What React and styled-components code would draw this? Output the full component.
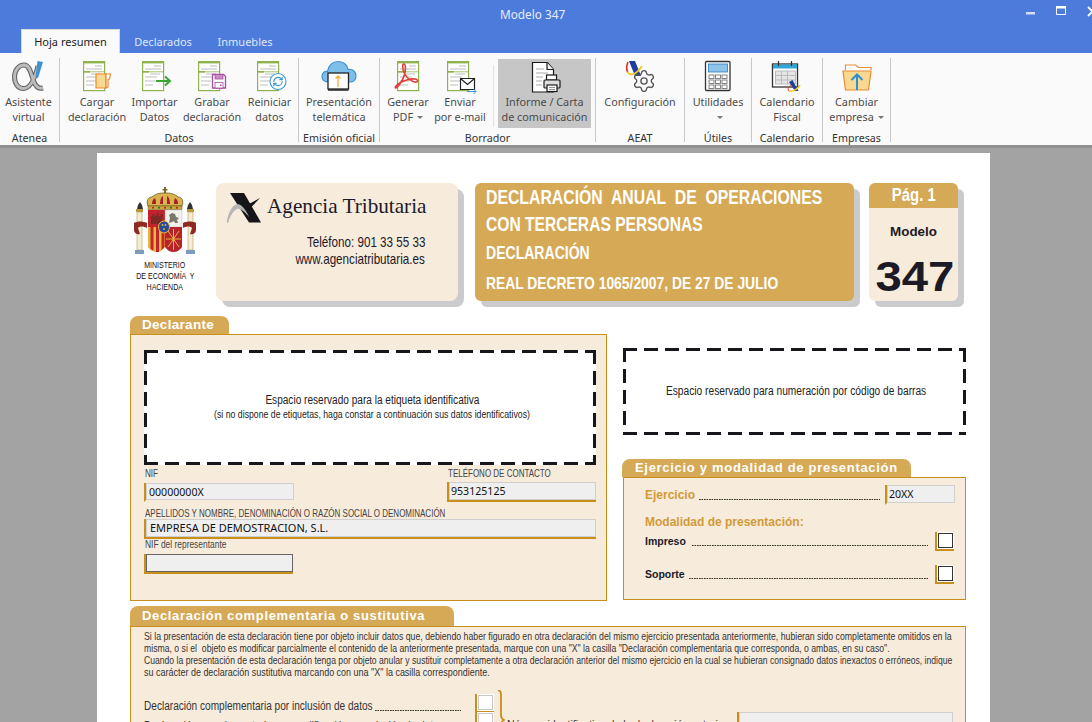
import React from 'react'
import styled, { createGlobalStyle } from 'styled-components'
import { Settings, RefreshCw } from 'lucide-react'

const GOLD = '#c8901a'
const TAN = '#d6a956'
const CREAM = '#f7ebdc'
const SANS = '"Liberation Sans", Arial, sans-serif'
const UI = '"Noto Sans", "Open Sans", sans-serif'

const GlobalStyle = createGlobalStyle`
  html, body { margin: 0; padding: 0; background: #a3a3a3; }
  * { box-sizing: border-box; }
`

const Window = styled.div`
  width: 1092px;
  height: 722px;
  overflow: hidden;
  display: flex;
  flex-direction: column;
  font-family: ${UI};
`

const TitleBar = styled.header`
  height: 53px;
  flex: none;
  background: #4c7bdc;
  color: #fff;
`

const TitleRow = styled.div`
  height: 29px;
  display: grid;
  grid-template-columns: 500px auto 1fr;
  align-items: center;
`

const Title = styled.div`
  font-size: 11.8px;
  color: #e6ecfa;
  grid-column: 2;
  margin-top: -2px;
`

const Controls = styled.div`
  display: flex;
  justify-content: flex-end;
  align-items: flex-start;
  gap: 21px;
  margin-right: -6px;
  margin-top: -6px;
`

const Tabs = styled.nav`
  height: 24px;
  display: flex;
  padding-left: 21px;
  font-size: 11px;
`

const Tab = styled.div`
  height: 24px;
  line-height: 25px;
  text-align: center;
  width: ${p => p.$w}px;
  background: ${p => (p.$active ? '#fafafa' : 'transparent')};
  color: ${p => (p.$active ? '#222' : '#dfe7f8')};
  box-shadow: ${p => (p.$active ? 'inset 1px 1px 0 #d8d8d8, inset -1px 0 0 #d8d8d8' : 'none')};
`

const Ribbon = styled.section`
  height: 95px;
  flex: none;
  padding-top: 5px;
  display: flex;
  align-items: flex-start;
  background: #fafafa;
  border-bottom: 3px solid #909090;
`

const Group = styled.div`
  width: ${p => p.$w}px;
  height: 84px;
  flex: none;
  border-right: 1px solid #c9c9c9;
`

const GroupButtons = styled.div`
  height: 72px;
  display: flex;
  align-items: flex-start;
  padding-left: ${p => p.$pl || 0}px;
`

const GroupLabel = styled.div`
  text-align: center;
  font-size: 10.7px;
  line-height: 16px;
  color: #333;
  white-space: nowrap;
`

const RibbonButton = styled.div`
  width: ${p => p.$w}px;
  height: ${p => (p.$active ? 69 : 72)}px;
  margin-top: ${p => (p.$active ? 1 : 0)}px;
  flex: none;
  display: flex;
  flex-direction: column;
  align-items: center;
  background: ${p => (p.$active ? '#c6c6c6' : 'transparent')};
  color: #4a4a4a;
  font-size: 10.8px;
  line-height: 15px;
  text-align: center;
  white-space: nowrap;
`

const IconSlot = styled.div`
  height: ${p => (p.$active ? 35 : 36)}px;
  flex: none;
  svg { display: block; }
`

const ThinSep = styled.div`
  width: 1px;
  height: 62px;
  margin: 7px 4px 0 6px;
  background: #e0e0e0;
  flex: none;
`

const Caret = styled.span`
  display: inline-block;
  width: 0;
  height: 0;
  margin-left: 4px;
  vertical-align: 2px;
  border-left: 3px solid transparent;
  border-right: 3px solid transparent;
  border-top: 3px solid #777;
`

const Workspace = styled.main`
  flex: 1;
  min-height: 0;
  background: #a3a3a3;
  padding: 5px 0 0 97px;
`

const Page = styled.div`
  width: 893px;
  height: 700px;
  background: #fff;
  padding: 30px 24px 0 33px;
`

// the form uses a condensed face, none is installed so Arial metrics get squeezed
const Squeeze = styled.span`
  display: inline-block;
  width: ${p => (p.$w ? `${p.$w}px` : 'auto')};
  flex: none;
  margin-bottom: ${p => p.$mb || 0}px;
  white-space: pre;
  transform: scaleX(${p => p.$x});
  transform-origin: ${p => p.$origin || 'left'} center;
`

const Header = styled.div`
  display: flex;
  height: 118px;
`

const Ministry = styled.div`
  width: 86px;
  flex: none;
  padding-left: 3px;
  padding-top: 4px;
`

const MinistryName = styled.div`
  width: 64px;
  display: flex;
  flex-direction: column;
  align-items: center;
  font-family: ${SANS};
  font-size: 8.8px;
  line-height: 11px;
  color: #111;
`

const AgencyCard = styled.div`
  width: 242px;
  border-radius: 8px;
  background: ${CREAM};
  box-shadow: 6px 6px 0 #cbcbcd;
  padding: 10px 33px 0 11px;
  display: flex;
  flex-direction: column;
`

const AgencyBrand = styled.div`
  display: flex;
  align-items: flex-start;
  gap: 6px;
  font-family: "Liberation Serif", serif;
  font-size: 21.2px;
  line-height: 27px;
  color: #1a1a2a;
  height: 32px;
  white-space: nowrap;
  svg { flex: none; }
`

const AgencyContact = styled.div`
  margin-top: 9px;
  display: flex;
  flex-direction: column;
  align-items: flex-end;
  font-family: ${SANS};
  font-size: 14.2px;
  line-height: 17px;
  color: #1a1a2a;
`

const TitleCard = styled.div`
  width: 379px;
  margin-left: 17px;
  border-radius: 6px;
  background: ${TAN};
  box-shadow: 6px 6px 0 #cbcbcd;
  padding: 0 11px;
  font-family: ${SANS};
  font-weight: bold;
  color: #fff;
  display: flex;
  flex-direction: column;
`

const TitleLine = styled.div`
  height: ${p => p.$h}px;
  line-height: ${p => p.$h}px;
  font-size: ${p => p.$size}px;
  white-space: nowrap;
`

const PageCard = styled.div`
  width: 89px;
  margin-left: 15px;
  border-radius: 6px;
  background: ${CREAM};
  box-shadow: 6px 6px 0 #cbcbcd;
  text-align: center;
`

const PageNumber = styled.div`
  height: 25px;
  line-height: 25px;
  border-radius: 6px 6px 0 0;
  background: ${TAN};
  color: #fff;
  font-family: ${SANS};
  font-weight: bold;
  font-size: 17.5px;
`

const ModelLabel = styled.div`
  margin-top: 16px;
  font-family: ${SANS};
  font-weight: bold;
  font-size: 13.4px;
  line-height: 16px;
  color: #1c1a24;
`

const ModelNumber = styled.div`
  margin-top: 14px;
  padding-left: 3px;
  font-family: ${SANS};
  font-weight: bold;
  font-size: 43px;
  line-height: 44px;
  color: #1c1a24;
`

const FormGrid = styled.div`
  margin-top: 15px;
  display: grid;
  grid-template-columns: 477px 343px;
  column-gap: 16px;
  align-items: start;
`

const Spacer = styled.div`
  height: ${p => p.$h}px;
`

const SectionTab = styled.div`
  width: ${p => p.$w}px;
  height: ${p => p.$h || 18}px;
  line-height: ${p => p.$h || 18}px;
  margin-left: ${p => p.$ml || 0}px;
  padding-left: ${p => p.$pl}px;
  border-radius: 8px 8px 0 0;
  background: ${TAN};
  color: #fff;
  font-family: ${SANS};
  font-weight: bold;
  font-size: ${p => p.$size || 13}px;
  letter-spacing: ${p => p.$ls || 0}px;
  white-space: nowrap;
`

const Panel = styled.div`
  height: ${p => p.$h}px;
  border: 1px solid ${GOLD};
  background: ${CREAM};
  padding: ${p => p.$pad};
`

const Reserved = styled.div`
  height: ${p => p.$h}px;
  padding: 0 0 2px 4px;
  background-color: #fff;
  background-image:
    linear-gradient(90deg, #16161c 14px, transparent 14px),
    linear-gradient(90deg, #16161c 14px, transparent 14px),
    linear-gradient(#16161c 14px, transparent 14px),
    linear-gradient(#16161c 14px, transparent 14px);
  background-size: 21px 3px, 21px 3px, 3px 21px, 3px 21px;
  background-position: 0 0, 0 100%, 0 0, 100% 0;
  background-repeat: repeat-x, repeat-x, repeat-y, repeat-y;
  display: flex;
  flex-direction: column;
  align-items: center;
  justify-content: center;
  font-family: ${SANS};
  color: #222;
`

const ReservedMain = styled.div`
  font-size: 12px;
  line-height: 16px;
`

const ReservedSub = styled.div`
  font-size: 10.4px;
  line-height: 14px;
`

const FieldRow = styled.div`
  display: flex;
  justify-content: space-between;
  align-items: flex-end;
  margin-top: ${p => p.$mt}px;
`

const Field = styled.div`
  width: ${p => p.$w};
  margin-top: ${p => p.$mt || 0}px;
`

const FieldLabel = styled.div`
  height: 13px;
  line-height: ${p => p.$lh || 13}px;
  margin-bottom: ${p => p.$mb || 0}px;
  padding-left: 1px;
  font-family: ${SANS};
  font-size: 10.4px;
  color: #444;
  white-space: nowrap;
`

const Input = styled.div`
  height: ${p => p.$h || 20}px;
  width: ${p => p.$w || '100%'};
  flex: none;
  border-left: 2px solid ${GOLD};
  border-bottom: 2px solid ${p => (p.$plain ? CREAM : GOLD)};
  background: #efefef;
  box-shadow: inset 0 0 0 1px ${p => (p.$dark ? '#666' : '#cfcfcf')};
  padding-left: ${p => p.$pl || 3}px;
  font-family: ${UI};
  font-weight: normal;
  font-size: ${p => p.$size || 10.6}px;
  line-height: 18px;
  color: #111;
  white-space: nowrap;
`

const LeaderRow = styled.div`
  display: flex;
  align-items: ${p => p.$align || 'center'};
  height: ${p => p.$h}px;
  margin-top: ${p => p.$mt || 0}px;
  padding: 0 ${p => p.$pr || 0}px 0 ${p => p.$pl || 0}px;
  font-family: ${SANS};
  font-weight: ${p => (p.$normal ? 'normal' : 'bold')};
  font-size: ${p => p.$size}px;
  line-height: 13px;
  color: ${p => p.$color || '#1a1a24'};
  white-space: nowrap;
`

const Dots = styled.span`
  flex: 1;
  height: 3px;
  margin: ${p => p.$m};
  align-self: center;
  transform: translateY(${p => p.$dy || 4}px);
  background-image: radial-gradient(circle at 1px 1.5px, #332 0.8px, transparent 1px);
  background-size: 2.5px 3px;
  background-repeat: repeat-x;
`

const ModeTitle = styled.div`
  margin-top: 9px;
  height: 17px;
  line-height: 17px;
  font-family: ${SANS};
  font-weight: bold;
  font-size: 12px;
  color: #d39a38;
`

const Checkbox = styled.span`
  width: 19px;
  height: 19px;
  flex: none;
  border-left: 2px solid ${GOLD};
  border-bottom: 2px solid ${GOLD};
  background: #fff;
  display: flex;
  align-items: center;
  justify-content: center;
  &::after {
    content: '';
    width: 13px;
    height: 13px;
    border: 1px solid ${p => (p.$light ? '#c8c8c8' : '#333')};
  }
`

const Complement = styled.section`
  margin-top: 5px;
`

const Note = styled.div`
  padding: 4px 0 0 13px;
  font-family: ${SANS};
  font-size: 10.5px;
  line-height: 11.6px;
  color: #333;
`

const NoteLine = styled(Squeeze)`
  display: block;
  margin-top: ${p => p.$mt || 0}px;
`

const OptionRows = styled.div`
  margin-top: 16px;
  display: flex;
`

const OptionList = styled.div`
  width: 363px;
  flex: none;
`

const Brace = styled.div`
  width: 10px;
  flex: none;
  margin: -4px 0 0 3px;
  svg { display: block; }
`

const PriorNumber = styled.div`
  flex: 1;
  display: flex;
  font-family: ${SANS};
  font-size: 12px;
  color: #333;
`

const PriorLabel = styled.div`
  width: 230px;
  flex: none;
  padding-top: 24px;
`

const PriorInput = styled.div`
  width: 216px;
  padding-top: 18px;
`

function Doc({ x = 0, y = 3 }) {
  return (
    <g transform={`translate(${x} ${y})`}>
      <rect x=".6" y=".6" width="21" height="29" fill="#fff" stroke="#8fb14e" strokeWidth="1.2" />
      <rect x="0" y="0" width="22" height="2.4" fill="#8fb14e" />
      <rect x="0" y="10" width="7" height="1.6" fill="#8fb14e" />
      <path d="M1 10.8h21" stroke="#8fb14e" strokeWidth=".8" />
      <path d="M12 5h7M3 8h16M8 13h10M3 16h12M3 20h10M3 24h8" stroke="#bdbdbd" strokeWidth="1" />
    </g>
  )
}

const IconBox = ({ w = 36, children }) => (
  <svg width={w} height="36" viewBox={`0 0 ${w} 36`}>{children}</svg>
)

const alphaPath = 'M27 8C24 20 20 30 13 30.500 7 31 3.500 25 3.500 19 3.500 12 8 7 13 7c6 0 7 9 10 17 2 5 5 7 9 6'

const AlphaIcon = () => (
  <IconBox>
    <path d={alphaPath} fill="none" stroke="#666" strokeWidth="5" />
    <path d={alphaPath} fill="none" stroke="#bcbcbc" strokeWidth="2.800" />
    <path d="M26.500 3l5.500 1-5 16-2.500-1z" fill="#3f93d3" />
  </IconBox>
)

const LoadIcon = () => (
  <IconBox>
    <Doc x={4} />
    <path d="M17 16h10v14H17z" fill="#f7d98f" stroke="#ed8a2d" strokeWidth="1.2" />
    <path d="M27 16h4.500l-1 5-1.500 .5V29l-2 1z" fill="#fff" stroke="#ed8a2d" strokeWidth="1.2" />
  </IconBox>
)

const ImportIcon = () => (
  <IconBox>
    <Doc x={5} />
    <path d="M19 23h13" stroke="#3aa535" strokeWidth="2" />
    <path d="M28 18.500l5 4.500-5 4.500" fill="none" stroke="#3aa535" strokeWidth="2" />
  </IconBox>
)

const SaveIcon = () => (
  <IconBox>
    <Doc x={4} />
    <path d="M18.500 16.500h11l2 2V30h-13z" fill="#fff" stroke="#a64f9f" strokeWidth="1.3" />
    <rect x="21" y="16.500" width="8" height="4.500" fill="#c98cc4" stroke="#a64f9f" strokeWidth=".8" />
    <rect x="21" y="24.500" width="8" height="5.500" fill="#fff" stroke="#a64f9f" strokeWidth=".8" />
    <rect x="26" y="26.500" width="1.500" height="1.500" fill="#a64f9f" />
  </IconBox>
)

const ResetIcon = () => (
  <IconBox>
    <Doc x={5} />
    <circle cx="26" cy="23.500" r="8" fill="#fff" stroke="#3b97dc" strokeWidth="1.1" />
    <RefreshCw x={20.5} y={18} size={11} color="#3b97dc" strokeWidth={2.6} />
  </IconBox>
)

const CloudIcon = () => (
  <IconBox>
    <path d="M7 24c-4 0-6-2.500-6-5.500C1 15 3.500 13 6.500 13.500 7.500 7.500 11.500 3.500 17.500 3.500c5.500 0 9 4 9.500 8 4.500-1 8 2 8 6.500 0 4-3 6-6 6z" fill="#7ebee9" stroke="#3f93d3" strokeWidth="1.2" />
    <rect x="7" y="15" width="20.500" height="16" fill="#fff" stroke="#222" strokeWidth="1.3" />
    <path d="M7 32h20.500" stroke="#222" strokeWidth="1.500" />
    <path d="M17 29V18M14.500 20.500L17 18l2.500 2.500" fill="none" stroke="#f3a81f" strokeWidth="1.2" />
  </IconBox>
)

const PdfIcon = () => (
  <IconBox>
    <Doc x={7} />
    <path d="M5.500 30c3-1 7.500-8 9-13.500 1.200-4.500 1.500-10-.5-10.500-2-.5-1.500 5 0 8.500 2.500 5 6 8.500 11 9.500 3.500 .6 3.500-2.500 0-3-5-.6-12 1.500-16 4.500-2 1.500-4.500 4-3.500 4.500z" fill="none" stroke="#e0403a" strokeWidth="1.600" />
  </IconBox>
)

const MailIcon = () => (
  <IconBox>
    <Doc x={5} />
    <path d="M18.500 20.500h14v11h-14z" fill="#fff" stroke="#222" strokeWidth="1.2" />
    <path d="M18.500 20.500l7 6 7-6" fill="none" stroke="#222" strokeWidth="1.2" />
    <path d="M25 33.500h9M31.500 31l2.500 2.500-2.500 2.500" fill="none" stroke="#3b97dc" strokeWidth="1" />
  </IconBox>
)

const PrinterIcon = () => (
  <IconBox>
    <path d="M5.500 3.500h15l6 7V33h-21z" fill="#fff" stroke="#1a1a1a" strokeWidth="1.2" />
    <path d="M20 3.500v7h6.500" fill="#eee" stroke="#1a1a1a" strokeWidth="1.2" />
    <path d="M9 10h8M9 14h12M9 18h7M9 22h6M9 26h6" stroke="#aaa" strokeWidth="1" />
    <rect x="19.500" y="16" width="10" height="5" fill="#fff" stroke="#1a1a1a" strokeWidth="1.2" />
    <rect x="17" y="21" width="16" height="8" rx="1" fill="#ddd" stroke="#1a1a1a" strokeWidth="1.2" />
    <rect x="20" y="26" width="10" height="6.500" fill="#fff" stroke="#1a1a1a" strokeWidth="1.2" />
    <path d="M22 28.500h6M22 30.500h6" stroke="#777" strokeWidth=".8" />
  </IconBox>
)

const ConfigIcon = () => (
  <IconBox>
    <path d="M7 3h6l6 15h-6z" fill="#1d3e9c" />
    <path d="M6 4c-1.500 3-1.500 7-.5 10" fill="none" stroke="#e02b20" strokeWidth="1.600" />
    <Settings x={9.5} y={10.5} size={25} color="#555" strokeWidth={1.3} />
    <path d="M5 14q6 7 15-6" fill="none" stroke="#f7c91c" strokeWidth="1.800" />
  </IconBox>
)

const CalculatorIcon = () => (
  <IconBox w={32}>
    <rect x="3.500" y="3.500" width="24.500" height="29" rx="1" fill="#fff" stroke="#333" strokeWidth="1.3" />
    <rect x="6.500" y="6" width="19" height="8" fill="#8fc4ea" stroke="#2b7cbc" strokeWidth=".8" />
    {[0, 1, 2].map(r => [0, 1, 2].map(c => (
      <rect key={`${r}${c}`} x={7 + c * 6.500} y={17 + r * 5} width="5" height="3.500" fill="#fff" stroke="#777" strokeWidth=".9" />
    )))}
  </IconBox>
)

const CalendarIcon = () => (
  <IconBox>
    <rect x="3.500" y="6" width="25" height="23" fill="#fff" stroke="#333" strokeWidth="1.3" />
    <rect x="4" y="6.500" width="24" height="4" fill="#33a6d8" />
    <path d="M9.500 3v5M22.500 3v5" stroke="#333" strokeWidth="1.2" />
    <path d="M6.500 13h20v13h-20zM6.500 17.500h20M6.500 22h20M12.500 13v13M18.500 13v13" fill="#e6e6e6" stroke="#bbb" strokeWidth="1" />
    <path d="M20 24l3.500-2 6 11H26z" fill="#1d3e9c" />
    <path d="M20 33c4 1 9-2 11-6" fill="none" stroke="#f7c91c" strokeWidth="1.600" />
    <path d="M20 33c-2-2 0-5 2-6" fill="none" stroke="#e02b20" strokeWidth="1" />
  </IconBox>
)

const FolderIcon = () => (
  <IconBox w={34}>
    <path d="M5.500 12V7h10l3 2.500h12.500V12" fill="#fff" stroke="#ea8a3a" strokeWidth="1.2" />
    <path d="M3 13h28l-2.500 19h-23z" fill="#f8d98f" stroke="#ea8a3a" strokeWidth="1.2" />
    <path d="M17 32V17M11.500 22L17 16.500 22.500 22" fill="none" stroke="#2f8fd6" strokeWidth="2" />
  </IconBox>
)

const Crest = () => (
  <svg width="64" height="68" viewBox="0 0 64 68">
    <path d="M31 0h2v6h-2zM29.500 2h5v1.500h-5z" fill="#7a6a2a" />
    <path d="M15 19c-2-5 0-9 4-9 4-3.500 8-4 13-4s9 .5 13 4c4 0 6 4 4 9z" fill="#d9b44e" stroke="#6b5522" strokeWidth=".8" />
    <path d="M19 17c0-3 1-5 3-6 1 2 1 4 1 6zM27 17c0-4 1-7 3-8v8zM34 17V9c2 1 3 4 3 8zM41 17c0-2 0-4 1-6 2 1 3 3 3 6z" fill="#a81f2a" />
    <path d="M15 19h34v3.500H15z" fill="#c9a53a" stroke="#6b5522" strokeWidth=".5" />
    <circle cx="20" cy="20.700" r="1" fill="#b3202a" /><circle cx="26" cy="20.700" r="1" fill="#1d6b3a" /><circle cx="32" cy="20.700" r="1" fill="#b3202a" /><circle cx="38" cy="20.700" r="1" fill="#1d6b3a" /><circle cx="44" cy="20.700" r="1" fill="#b3202a" />
    <rect x="15" y="23" width="17" height="17" fill="#c3232c" />
    <rect x="32" y="23" width="17" height="17" fill="#f2f0ea" stroke="#aaa" strokeWidth=".4" />
    <path d="M18 37v-8h1.500v-2h2v2h2v-3h2v3h2v-2h2v10z" fill="#7d2a24" />
    <path d="M36 36l1-5-1-3 3-2 3 1 1 3 3 1-2 2 1 3h-3l-1-2-2 1z" fill="#77776e" />
    <path d="M15 40h17v20c-2 3-5 5-8.500 5S17 63 15 60z" fill="#e6b63e" />
    <path d="M17.500 40h3v23.500l-3-1.500zM23 40h3v25h-3zM28.500 40h3v20l-3 3z" fill="#c3232c" />
    <path d="M32 40h17v20c-2 3-5 5-8.500 5S34 63 32 60z" fill="#b8222a" />
    <path d="M35 44l11 16M46 44L35 60M33 52h15M40.500 42v21" stroke="#e6b63e" strokeWidth="1" />
    <ellipse cx="31" cy="40" rx="5.500" ry="6" fill="#2a4a9a" stroke="#e6b63e" strokeWidth="1" />
    <circle cx="29.500" cy="38" r=".9" fill="#e6b63e" /><circle cx="32.500" cy="38" r=".9" fill="#e6b63e" /><circle cx="31" cy="42" r=".9" fill="#e6b63e" />
    <path d="M3 22h7v3H3zM54 22h7v3h-7z" fill="#b8963c" />
    <path d="M4 25h5v38H4zM55 25h5v38h-5z" fill="#f3edd8" stroke="#b99c50" strokeWidth=".6" />
    <path d="M5 18l2-3 2 3 1 4H4zM55 18l2-3 2 3 1 4h-6z" fill="#333" />
    <path d="M2 63h9v4H2zM53 63h9v4h-9z" fill="#7d9ac2" />
    <path d="M1 36c3-2 9-2 13 0v5c-4-2-7-2-9 0l2 6c-3 1-6-1-6-4zM63 36c-3-2-9-2-13 0v5c4-2 7-2 9 0l-2 6c3 1 6-1 6-4z" fill="#8e2a22" />
  </svg>
)

const AgencyLogo = () => (
  <svg width="34" height="30" viewBox="0 0 34 30">
    <path d="M3 0h14l17 29.500H22z" fill="#15151a" />
    <path d="M33 5L21.500 17 19 12.500z" fill="#15151a" />
    <path d="M0 30C0 22 5 12 10 11c4 0 8 4 12 13-5-6-9-9-12-8-4 2-7 7-9 14z" fill="#b5b5b5" />
  </svg>
)

const WindowControls = () => (
  <Controls>
    <svg width="9" height="9" viewBox="0 0 9 9"><rect y="6" width="9" height="2.500" fill="#d6def2" /></svg>
    <svg width="10" height="9" viewBox="0 0 10 9"><path d="M.5 1.500h9v7h-9z" fill="none" stroke="#fff" /><rect width="10" height="2.500" fill="#fff" /></svg>
    <svg width="11" height="11" viewBox="0 0 11 11"><path d="M1 1l9 9M10 1l-9 9" stroke="#fff" strokeWidth="1.800" /></svg>
  </Controls>
)

const RibbonBtn = ({ w, icon, lines, caret, active }) => (
  <RibbonButton $w={w} $active={active}>
    <IconSlot $active={active}>{icon}</IconSlot>
    {lines.map((text, i) => (
      <div key={text || i}>
        {text}
        {caret && i === lines.length - 1 && <Caret />}
      </div>
    ))}
  </RibbonButton>
)

const noteLines = [
  { x: 0.832, text: 'Si la presentación de esta declaración tiene por objeto incluir datos que, debiendo haber figurado en otra declaración del mismo ejercicio presentada anteriormente, hubieran sido completamente omitidos en la' },
  { x: 0.826, text: 'misma, o si el  objeto es modificar parcialmente el contenido de la anteriormente presentada, marque con una "X" la casilla "Declaración complementaria que corresponda, o ambas, en su caso".' },
  { x: 0.82, mt: 1, text: 'Cuando la presentación de esta declaración tenga por objeto anular y sustituir completamente a otra declaración anterior del mismo ejercicio en la cual se hubieran consignado datos inexactos o erróneos, indique' },
  { x: 0.855, text: 'su carácter de declaración sustitutiva marcando con una "X" la casilla correspondiente.' },
]

export default function App() {
  return (
    <Window>
      <GlobalStyle />
      <TitleBar>
        <TitleRow>
          <Title>Modelo 347</Title>
          <WindowControls />
        </TitleRow>
        <Tabs>
          <Tab $active $w={99}>Hoja resumen</Tab>
          <Tab $w={86}>Declarados</Tab>
          <Tab $w={78}>Inmuebles</Tab>
        </Tabs>
      </TitleBar>

      <Ribbon>
        <Group $w={60}>
          <GroupButtons>
            <RibbonBtn w={57} icon={<AlphaIcon />} lines={['Asistente', 'virtual']} />
          </GroupButtons>
          <GroupLabel>Atenea</GroupLabel>
        </Group>
        <Group $w={239}>
          <GroupButtons $pl={8}>
            <RibbonBtn w={58} icon={<LoadIcon />} lines={['Cargar', 'declaración']} />
            <RibbonBtn w={57} icon={<ImportIcon />} lines={['Importar', 'Datos']} />
            <RibbonBtn w={58} icon={<SaveIcon />} lines={['Grabar', 'declaración']} />
            <RibbonBtn w={57} icon={<ResetIcon />} lines={['Reiniciar', 'datos']} />
          </GroupButtons>
          <GroupLabel>Datos</GroupLabel>
        </Group>
        <Group $w={81}>
          <GroupButtons>
            <RibbonBtn w={80} icon={<CloudIcon />} lines={['Presentación', 'telemática']} />
          </GroupButtons>
          <GroupLabel>Emisión oficial</GroupLabel>
        </Group>
        <Group $w={216}>
          <GroupButtons $pl={3}>
            <RibbonBtn w={50} icon={<PdfIcon />} lines={['Generar', 'PDF']} caret />
            <RibbonBtn w={54} icon={<MailIcon />} lines={['Enviar', 'por e-mail']} />
            <ThinSep />
            <RibbonBtn active w={93} icon={<PrinterIcon />} lines={['Informe / Carta', 'de comunicación']} />
          </GroupButtons>
          <GroupLabel>Borrador</GroupLabel>
        </Group>
        <Group $w={89}>
          <GroupButtons>
            <RibbonBtn w={88} icon={<ConfigIcon />} lines={['Configuración']} />
          </GroupButtons>
          <GroupLabel>AEAT</GroupLabel>
        </Group>
        <Group $w={67}>
          <GroupButtons>
            <RibbonBtn w={66} icon={<CalculatorIcon />} lines={['Utilidades', '']} caret />
          </GroupButtons>
          <GroupLabel>Útiles</GroupLabel>
        </Group>
        <Group $w={71}>
          <GroupButtons>
            <RibbonBtn w={70} icon={<CalendarIcon />} lines={['Calendario', 'Fiscal']} />
          </GroupButtons>
          <GroupLabel>Calendario</GroupLabel>
        </Group>
        <Group $w={68}>
          <GroupButtons>
            <RibbonBtn w={67} icon={<FolderIcon />} lines={['Cambiar', 'empresa']} caret />
          </GroupButtons>
          <GroupLabel>Empresas</GroupLabel>
        </Group>
      </Ribbon>

      <Workspace>
        <Page>
          <Header>
            <Ministry>
              <Crest />
              <MinistryName>
                <Squeeze $x={0.8} $origin="center">MINISTERIO</Squeeze>
                <Squeeze $x={0.8} $origin="center">DE ECONOMÍA  Y</Squeeze>
                <Squeeze $x={0.8} $origin="center">HACIENDA</Squeeze>
              </MinistryName>
            </Ministry>
            <AgencyCard>
              <AgencyBrand><AgencyLogo />Agencia Tributaria</AgencyBrand>
              <AgencyContact>
                <Squeeze $x={0.82} $origin="right">Teléfono: 901 33 55 33</Squeeze>
                <Squeeze $x={0.82} $origin="right">www.agenciatributaria.es</Squeeze>
              </AgencyContact>
            </AgencyCard>
            <TitleCard>
              <TitleLine $h={28} $size={20}><Squeeze $x={0.79}>DECLARACIÓN  ANUAL  DE  OPERACIONES</Squeeze></TitleLine>
              <TitleLine $h={26} $size={20}><Squeeze $x={0.78}>CON TERCERAS PERSONAS</Squeeze></TitleLine>
              <TitleLine $h={32} $size={18}><Squeeze $x={0.78}>DECLARACIÓN</Squeeze></TitleLine>
              <TitleLine $h={28} $size={16.500}><Squeeze $x={0.84}>REAL DECRETO 1065/2007, DE 27 DE JULIO</Squeeze></TitleLine>
            </TitleCard>
            <PageCard>
              <PageNumber><Squeeze $x={0.85} $origin="center">Pág. 1</Squeeze></PageNumber>
              <ModelLabel>Modelo</ModelLabel>
              <ModelNumber><Squeeze $x={1.1} $origin="center">347</Squeeze></ModelNumber>
            </PageCard>
          </Header>

          <FormGrid>
            <div>
              <SectionTab $w={99} $pl={12} $ls={0.3} $size={13.5}>Declarante</SectionTab>
              <Panel $h={267} $pad="15px 10px 0 13px">
                <Reserved $h={115}>
                  <ReservedMain><Squeeze $x={0.84} $origin="center">Espacio reservado para la etiqueta identificativa</Squeeze></ReservedMain>
                  <ReservedSub><Squeeze $x={0.84} $origin="center">(si no dispone de etiquetas, haga constar a continuación sus datos identificativos)</Squeeze></ReservedSub>
                </Reserved>
                <FieldRow $mt={3}>
                  <Field $w="150px">
                    <FieldLabel $mb={1} $lh={9}><Squeeze $x={0.78}>NIF</Squeeze></FieldLabel>
                    <Input $h={19} $plain>00000000X</Input>
                  </Field>
                  <Field $w="149px">
                    <FieldLabel $mb={1} $lh={11}><Squeeze $x={0.77}>TELÉFONO DE CONTACTO</Squeeze></FieldLabel>
                    <Input $pl={2}>953125125</Input>
                  </Field>
                </FieldRow>
                <Field $w="100%" $mt={4}>
                  <FieldLabel $lh={15}><Squeeze $x={0.77}>APELLIDOS Y NOMBRE, DENOMINACIÓN O RAZÓN SOCIAL O DENOMINACIÓN</Squeeze></FieldLabel>
                  <Input $size={11} $pl={4}>EMPRESA DE DEMOSTRACION, S.L.</Input>
                </Field>
                <Field $w="149px" $mt={2}>
                  <FieldLabel $lh={7}><Squeeze $x={0.81}>NIF del representante</Squeeze></FieldLabel>
                  <Input $dark />
                </Field>
              </Panel>
            </div>
            <div>
              <Spacer $h={32} />
              <Reserved $h={87}>
                <ReservedMain><Squeeze $x={0.85} $origin="center">Espacio reservado para numeración por código de barras</Squeeze></ReservedMain>
              </Reserved>
              <Spacer $h={24} />
              <SectionTab $w={289} $ml={-1} $pl={13} $ls={0.7}>Ejercicio y modalidad de presentación</SectionTab>
              <Panel $h={123} $pad="7px 10px 0 21px">
                <LeaderRow $h={20} $size={12} $color="#d39a38">
                  Ejercicio
                  <Dots $m="0 5px 0 4px" />
                  <Input $w="70px" $plain $pl={2}>20XX</Input>
                </LeaderRow>
                <ModeTitle>Modalidad de presentación:</ModeTitle>
                <LeaderRow $h={19} $mt={1} $size={10.500} $pr={1}>
                  Impreso
                  <Dots $m="0 7px 0 6px" />
                  <Checkbox />
                </LeaderRow>
                <LeaderRow $h={19} $mt={14} $size={10.500} $pr={1}>
                  Soporte
                  <Dots $m="0 7px 0 4px" />
                  <Checkbox />
                </LeaderRow>
              </Panel>
            </div>
          </FormGrid>

          <Complement>
            <SectionTab $w={324} $h={20} $pl={12} $ls={0.65}>Declaración complementaria o sustitutiva</SectionTab>
            <Panel $h={200} $pad="0">
              <Note>
                {noteLines.map(line => (
                  <NoteLine key={line.text} $x={line.x} $mt={line.mt}>{line.text}</NoteLine>
                ))}
              </Note>
              <OptionRows>
                <OptionList>
                  <LeaderRow $normal $align="flex-end" $h={19} $size={12} $color="#333" $pl={13}>
                    <Squeeze $x={0.84} $w={231}>Declaración complementaria por inclusión de datos</Squeeze>
                    <Dots $m="0 14px 0 0" $dy={7} />
                    <Checkbox $light />
                  </LeaderRow>
                  <LeaderRow $normal $align="flex-end" $h={18} $size={12} $color="#333" $pl={13}>
                    <Squeeze $x={0.84} $w={298} $mb={-2}>Declaración complementaria por modificación o anulación de datos</Squeeze>
                    <Dots $m="0 14px 0 0" $dy={9} />
                    <Checkbox $light />
                  </LeaderRow>
                </OptionList>
                <Brace>
                  <svg width="8" height="44" viewBox="0 0 8 44"><path d="M1 0c3 1 3 3 3 6v19c0 3 1 4 3 5-2 1-3 2-3 5v9" fill="none" stroke={GOLD} strokeWidth="1.800" /></svg>
                </Brace>
                <PriorNumber>
                  <PriorLabel><Squeeze $x={0.88}>Número identificativo de la declaración anterior</Squeeze></PriorLabel>
                  <PriorInput><Input $h={40} $plain /></PriorInput>
                </PriorNumber>
              </OptionRows>
            </Panel>
          </Complement>
        </Page>
      </Workspace>
    </Window>
  )
}
